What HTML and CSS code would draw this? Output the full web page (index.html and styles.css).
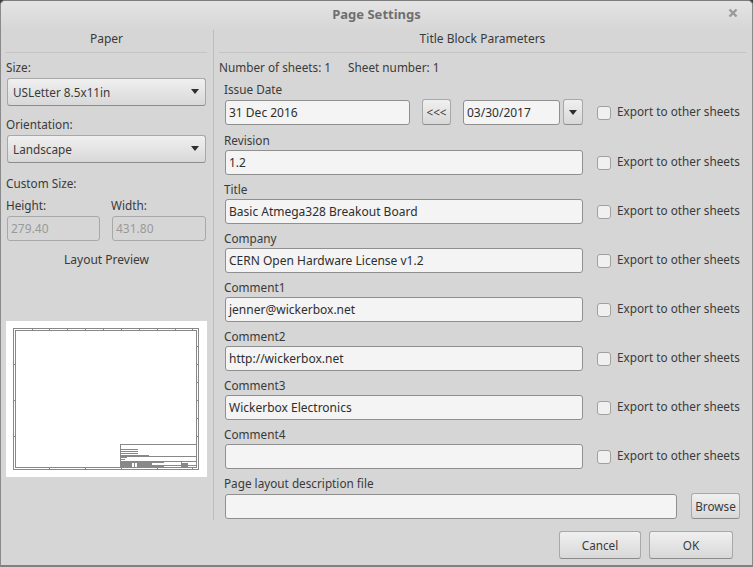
FILE: index.html
```html
<!DOCTYPE html>
<html lang="en">
<head>
    <meta charset="UTF-8">
    <title>Page Settings</title>
    <link rel="stylesheet" href="styles.css">
</head>
<body>
    <div class="window">
        <div class="titlebar">
            <span class="title">Page Settings</span>
            <svg class="close" width="10" height="10" viewBox="0 0 10 10"><path d="M1.5 1.5l7 7M8.5 1.5l-7 7" stroke="#9a9a9a" stroke-width="2.4" fill="none"/></svg>
        </div>
        <div class="main">
            <div class="paper">
                <div class="group-head">Paper</div>
                <div class="label size-label">Size:</div>
                <div class="combo"><span>USLetter 8.5x11in</span><i class="arrow"></i></div>
                <div class="label orient-label">Orientation:</div>
                <div class="combo"><span>Landscape</span><i class="arrow"></i></div>
                <div class="label custom-label">Custom Size:</div>
                <div class="custom">
                    <div>
                        <div class="label">Height:</div>
                        <div class="input disabled">279.40</div>
                    </div>
                    <div>
                        <div class="label">Width:</div>
                        <div class="input disabled">431.80</div>
                    </div>
                </div>
                <div class="preview-label">Layout Preview</div>
                <div class="preview">
                    <svg width="201" height="156" viewBox="0 0 201 156" shape-rendering="crispEdges" fill="none" stroke="#888">
                        <rect x="7.5" y="7.5" width="185" height="141"/>
                        <rect x="9.500" y="9.500" width="181" height="137"/>
                        <path d="M26 8v2M43 8v2M61 8v2M79 8v2M97 8v2M115 8v2M133 8v2M151 8v2M169 8v2M186 8v2"/>
                        <path d="M43 147v2M79 147v2M115 147v2M151 147v2M186 147v2"/>
                        <path d="M8 43h2M8 79h2M8 115h2M191 25h2M191 43h2M191 61h2M191 79h2M191 97h2M191 115h2"/>
                        <rect x="114.500" y="123.500" width="76" height="23"/>
                        <path d="M115 128.500h17M115 130.500h17M115 132.500h17M115 134.500h28M115 135.500h76M115 136.500h6M115 138.500h4M115 140.500h76M115 141.500h43M146 144.500h45M175 141v5"/>
                        <path class="tb-fill" d="M115 142h11v4h-11zM128 142h1v4h-1zM131 142h15v4h-15zM146 145h12v1h-12zM176 142h6v4h-6z"/>
                    </svg>
                </div>
            </div>
            <div class="params">
                <div class="group-head">Title Block Parameters</div>
                <div class="sheets"><span>Number of sheets: 1</span><span>Sheet number: 1</span></div>
                <div class="rows">
                    <div class="row first-row">
                        <div class="field">
                            <div class="label">Issue Date</div>
                            <div class="date-line">
                                <div class="input date-text">31 Dec 2016</div>
                                <div class="btn copy">&lt;&lt;&lt;</div>
                                <div class="input picker">03/30/2017</div>
                                <div class="btn drop"><i class="arrow"></i></div>
                            </div>
                        </div>
                        <label class="export"><i class="check"></i>Export to other sheets</label>
                    </div>
                    <div class="row">
                        <div class="field"><div class="label">Revision</div><div class="input">1.2</div></div>
                        <label class="export"><i class="check"></i>Export to other sheets</label>
                    </div>
                    <div class="row">
                        <div class="field"><div class="label">Title</div><div class="input">Basic Atmega328 Breakout Board</div></div>
                        <label class="export"><i class="check"></i>Export to other sheets</label>
                    </div>
                    <div class="row">
                        <div class="field"><div class="label">Company</div><div class="input">CERN Open Hardware License v1.2</div></div>
                        <label class="export"><i class="check"></i>Export to other sheets</label>
                    </div>
                    <div class="row">
                        <div class="field"><div class="label">Comment1</div><div class="input">jenner@wickerbox.net</div></div>
                        <label class="export"><i class="check"></i>Export to other sheets</label>
                    </div>
                    <div class="row">
                        <div class="field"><div class="label">Comment2</div><div class="input">http://wickerbox.net</div></div>
                        <label class="export"><i class="check"></i>Export to other sheets</label>
                    </div>
                    <div class="row">
                        <div class="field"><div class="label">Comment3</div><div class="input">Wickerbox Electronics</div></div>
                        <label class="export"><i class="check"></i>Export to other sheets</label>
                    </div>
                    <div class="row">
                        <div class="field"><div class="label">Comment4</div><div class="input"></div></div>
                        <label class="export"><i class="check"></i>Export to other sheets</label>
                    </div>
                    <div class="row file-row">
                        <div class="field"><div class="label">Page layout description file</div><div class="input"></div></div>
                        <div class="btn browse">Browse</div>
                    </div>
                </div>
            </div>
        </div>
        <div class="footer">
            <div class="btn cancel">Cancel</div>
            <div class="btn ok">OK</div>
        </div>
    </div>
</body>
</html>
```

FILE: styles.css
```css
* {
    box-sizing: border-box;
}

html, body {
    margin: 0;
    height: 100%;
    overflow: hidden;
}

body {
    font-family: "Noto Sans", sans-serif;
    font-size: 11.75px;
    color: #3a3a3a;
    background-color: #3b3b3b;
}

.window {
    width: 753px;
    height: 567px;
    background-color: #d6d6d6;
    border: 1px solid #8a8a8a;
    border-bottom: 2px solid #808080;
    border-top-color: #7c7c7c;
    border-radius: 5px 5px 0 0;
    display: flex;
    flex-direction: column;
}

.titlebar {
    height: 29px;
    flex: none;
    display: flex;
    align-items: center;
    justify-content: center;
    position: relative;
    background: linear-gradient(#e4e4e4, #d6d6d6);
    border-radius: 5px 5px 0 0;
}

.title {
    font-weight: bold;
    font-size: 13px;
    color: #6f6f6f;
    margin-top: -3px;
}

.close {
    position: absolute;
    right: 14px;
    top: 7px;
}

.main {
    flex: none;
    height: 490px;
    display: flex;
}

.paper {
    width: 213px;
    flex: none;
    padding: 0 6px 0 5px;
    border-right: 1px solid #bdbdbd;
}

.params {
    flex: 1;
    padding: 0 6px 0 5px;
}

.group-head {
    height: 23px;
    line-height: 17px;
    font-size: 12px;
    text-align: center;
    border-bottom: 1px solid #c4c4c4;
}

.label {
    line-height: 17px;
    height: 17px;
}

.size-label {
    margin-top: 6px;
}

.orient-label {
    margin-top: 10px;
}

.custom-label {
    margin-top: 12px;
}

.combo {
    height: 28px;
    margin: 2px 1px 0;
    padding: 0 6px 1px 5px;
    display: flex;
    align-items: center;
    justify-content: space-between;
    border: 1px solid #a8a8a8;
    border-bottom-color: #8c8c8c;
    border-radius: 3px;
    background: linear-gradient(#f0f0f0, #d8d8d8);
}

.arrow {
    display: block;
    width: 0;
    height: 0;
    border-left: 4px solid transparent;
    border-right: 4px solid transparent;
    border-top: 5px solid #2e2e2e;
}

.custom {
    display: grid;
    grid-template-columns: 94px 95px;
    column-gap: 11px;
    margin-top: 5px;
}

.input {
    height: 25px;
    line-height: 23px;
    margin-left: 1px;
    padding: 0 3px;
    font-size: 12px;
    color: #2e2e2e;
    background-color: #f4f4f4;
    border: 1px solid #8f8f8f;
    border-radius: 3px;
    white-space: nowrap;
}

.input.disabled {
    margin-top: 2px;
    color: #9a9a9a;
    background-color: #d6d6d6;
    border-color: #a8a8a8;
}

.preview-label {
    margin-top: 10px;
    line-height: 17px;
    font-size: 12px;
    text-align: center;
}

.preview {
    width: 201px;
    height: 156px;
    margin-top: 53px;
    background-color: #fff;
}

.preview svg {
    display: block;
}

.tb-fill {
    fill: #888;
    stroke: none;
}

.sheets {
    display: flex;
    gap: 17px;
    margin-top: 6px;
    line-height: 17px;
}

.rows {
    margin-top: 5px;
    padding-left: 5px;
}

.row {
    display: flex;
    align-items: flex-end;
    height: 49px;
    padding-bottom: 4px;
}

.first-row {
    padding-bottom: 5px;
}

.field {
    width: 359px;
    flex: none;
}

.field > .input,
.date-line {
    margin-top: 1px;
}

.date-line {
    display: flex;
    align-items: center;
}

.date-line .date-text {
    width: 185px;
}

.btn {
    display: flex;
    align-items: center;
    justify-content: center;
    border: 1px solid #a8a8a8;
    border-bottom-color: #8c8c8c;
    border-radius: 3px;
    background: linear-gradient(#f0f0f0, #d8d8d8);
}

.copy {
    width: 29px;
    height: 26px;
    margin-left: 12px;
}

.date-line .picker {
    width: 97px;
    margin-left: 12px;
}

.drop {
    width: 20px;
    height: 26px;
    margin-left: 3px;
}

.export {
    display: flex;
    align-items: center;
    margin: 0 0 2px 14px;
    height: 25px;
    white-space: nowrap;
}

.check {
    width: 14px;
    height: 14px;
    margin: 4px 6px 0 0;
    background-color: #f0f0f0;
    border: 1px solid #a0a0a0;
    border-radius: 3px;
}

.file-row {
    padding-bottom: 3px;
}

.file-row .field {
    width: 453px;
}

.file-row .field > .input {
    margin-top: 2px;
}

.browse {
    width: 49px;
    height: 26px;
    margin-left: 14px;
}

.footer {
    flex: 1;
    display: flex;
    justify-content: flex-end;
    padding: 11px 19px 0 0;
    gap: 8px;
}

.cancel {
    width: 82px;
    height: 28px;
}

.ok {
    width: 84px;
    height: 28px;
}
```
